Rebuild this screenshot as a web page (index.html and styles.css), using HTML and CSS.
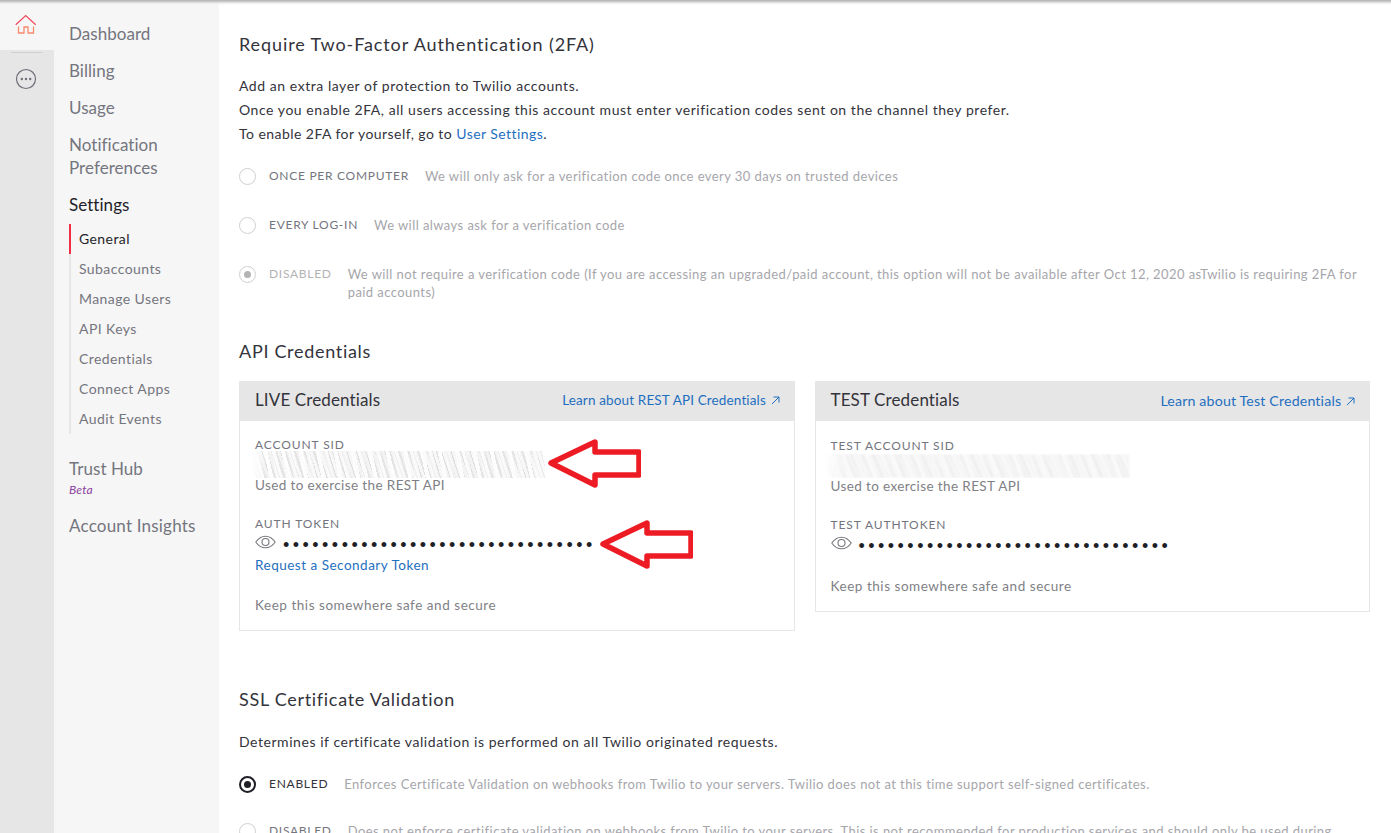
FILE: index.html
```html
<!DOCTYPE html>
<html lang="en">
<head>
<meta charset="utf-8">
<title>General Settings</title>
<link rel="stylesheet" href="styles.css">
</head>
<body>
<div class="app">
  <nav class="rail">
    <div class="rail-home">
      <svg width="22" height="20" viewBox="0 0 22 20" fill="none"><path d="M.7 9.700 10.700.6l10 9.100" stroke="#f5455c" stroke-width="1.200"/><path d="M3.500 11.500V18H9v-6h4v6h5.500v-6.500" stroke="#f78a6f" stroke-width="1.300"/></svg>
    </div>
    <div class="rail-more">
      <div class="rail-sep"></div>
      <svg width="22" height="22" viewBox="0 0 22 22" fill="none"><circle cx="11" cy="11" r="9.500" stroke="#6d6e78" stroke-width="1.200"/><circle cx="6.800" cy="11" r="1.200" fill="#6d6e78"/><circle cx="11" cy="11" r="1.200" fill="#6d6e78"/><circle cx="15.200" cy="11" r="1.200" fill="#6d6e78"/></svg>
    </div>
  </nav>
  <aside class="side">
    <a class="nav-item">Dashboard</a>
    <a class="nav-item">Billing</a>
    <a class="nav-item">Usage</a>
    <a class="nav-item">Notification Preferences</a>
    <a class="nav-item nav-current">Settings</a>
    <ul class="subnav">
      <li class="sub-active">General</li>
      <li>Subaccounts</li>
      <li>Manage Users</li>
      <li>API Keys</li>
      <li>Credentials</li>
      <li>Connect Apps</li>
      <li>Audit Events</li>
    </ul>
    <a class="nav-item nav-trust">Trust Hub</a>
    <div class="beta">Beta</div>
    <a class="nav-item nav-insights">Account Insights</a>
  </aside>
  <main class="main">
    <h2 class="title title-2fa">Require Two-Factor Authentication (2FA)</h2>
    <div class="intro">
      <p>Add an extra layer of protection to Twilio accounts.</p>
      <p>Once you enable 2FA, all users accessing this account must enter verification codes sent on the channel they prefer.</p>
      <p class="intro-last">To enable 2FA for yourself, go to <a class="link">User Settings</a>.</p>
    </div>
    <div class="option opt-first">
      <span class="radio"></span><span class="opt-label">ONCE PER COMPUTER</span><span class="opt-desc">We will only ask for a verification code once every 30 days on trusted devices</span>
    </div>
    <div class="option">
      <span class="radio"></span><span class="opt-label">EVERY LOG-IN</span><span class="opt-desc">We will always ask for a verification code</span>
    </div>
    <div class="option">
      <span class="radio radio-disabled"></span><span class="opt-label label-faded">DISABLED</span><span class="opt-desc">We will not require a verification code (If you are accessing an upgraded/paid account, this option will not be available after Oct 12, 2020 asTwilio is requiring 2FA for paid accounts)</span>
    </div>
    <h2 class="title title-api">API Credentials</h2>
    <div class="cards">
      <section class="card">
        <header class="card-head">
          <h3>LIVE Credentials</h3>
          <a class="link">Learn about REST API Credentials <svg class="ext" width="9" height="9" viewBox="0 0 9 9" fill="none" stroke="#1f6fc0" stroke-width="1"><path d="M1 8 8 1M2.500 1H8v5.500"/></svg></a>
        </header>
        <div class="card-body">
          <div class="cap">ACCOUNT SID</div>
          <div class="blur blur-live"></div>
          <div class="note note-used">Used to exercise the REST API</div>
          <div class="cap cap-token">AUTH TOKEN</div>
          <div class="token">
            <svg width="21" height="14" viewBox="0 0 21 14" fill="none" stroke="#77777e" stroke-width="1.100"><path d="M.8 7C3.500 3 7 1.200 10.500 1.200S17.500 3 20.200 7c-2.700 4-6.200 5.800-9.700 5.800S3.500 11 .8 7Z"/><circle cx="10.500" cy="7" r="3.500"/></svg>
            <span class="dots">••••••••••••••••••••••••••••••••</span>
          </div>
          <a class="link secondary">Request a Secondary Token</a>
          <div class="note note-safe">Keep this somewhere safe and secure</div>
        </div>
      </section>
      <section class="card card-test">
        <header class="card-head">
          <h3>TEST Credentials</h3>
          <a class="link link-test">Learn about Test Credentials <svg class="ext" width="9" height="9" viewBox="0 0 9 9" fill="none" stroke="#1f6fc0" stroke-width="1"><path d="M1 8 8 1M2.500 1H8v5.500"/></svg></a>
        </header>
        <div class="card-body body-test">
          <div class="cap">TEST ACCOUNT SID</div>
          <div class="blur blur-test"></div>
          <div class="note note-used">Used to exercise the REST API</div>
          <div class="cap cap-token">TEST AUTHTOKEN</div>
          <div class="token">
            <svg width="21" height="14" viewBox="0 0 21 14" fill="none" stroke="#77777e" stroke-width="1.100"><path d="M.8 7C3.500 3 7 1.200 10.500 1.200S17.500 3 20.200 7c-2.700 4-6.200 5.800-9.700 5.800S3.500 11 .8 7Z"/><circle cx="10.500" cy="7" r="3.500"/></svg>
            <span class="dots">••••••••••••••••••••••••••••••••</span>
          </div>
          <div class="note note-safe note-safe-test">Keep this somewhere safe and secure</div>
        </div>
      </section>
      <svg class="arrow arrow-a" width="96" height="54" viewBox="0 0 96 54" fill="none" stroke="#ed1c24" stroke-width="5.500" stroke-linejoin="round"><path d="M6 27 50 6v10h44v23H50v10Z"/></svg>
      <svg class="arrow arrow-b" width="96" height="54" viewBox="0 0 96 54" fill="none" stroke="#ed1c24" stroke-width="5.500" stroke-linejoin="round"><path d="M6 27 50 6v10h44v23H50v10Z"/></svg>
    </div>
    <h2 class="title title-ssl">SSL Certificate Validation</h2>
    <p class="ssl-intro">Determines if certificate validation is performed on all Twilio originated requests.</p>
    <div class="option opt-ssl">
      <span class="radio radio-on"></span><span class="opt-label label-dark">ENABLED</span><span class="opt-desc">Enforces Certificate Validation on webhooks from Twilio to your servers. Twilio does not at this time support self-signed certificates.</span>
    </div>
    <div class="option opt-ssl-2">
      <span class="radio"></span><span class="opt-label">DISABLED</span><span class="opt-desc opt-nowrap">Does not enforce certificate validation on webhooks from Twilio to your servers. This is not recommended for production services and should only be used during</span>
    </div>
  </main>
</div>
<div class="top-shadow"></div>
</body>
</html>
```
FILE: styles.css
```css
* { box-sizing: border-box; }
html, body { margin: 0; height: 833px; overflow: hidden; background: #fff; }
body { font-family: Lato, "Open Sans", sans-serif; color: #33333b; font-size: 14px; letter-spacing: .55px; }
p, h2, h3, ul { margin: 0; padding: 0; }
.top-shadow { position: absolute; left: 0; top: 0; width: 100%; height: 5px; background: linear-gradient(#b0b0b0, #cfcfcf 35%, rgba(240,240,240,.5) 75%, rgba(255,255,255,0)); }
.app { display: flex; height: 833px; }
.rail { width: 54px; background: #e6e6e6; flex: none; }
.rail-home { height: 50px; background: #f6f6f6; display: flex; justify-content: center; padding: 15px 3px 0 0; }
.rail-more { display: flex; flex-direction: column; align-items: center; padding-right: 2px; }
.rail-sep { width: 31px; height: 1px; background: #cfcfcf; margin: 2px 0 15px; }
.side { width: 165px; flex: none; background: #f6f6f6; padding: 22px 15px 0; }
.nav-item { display: block; font-size: 17px; line-height: 23px; color: #74757e; margin-bottom: 14px; letter-spacing: .05px; }
.nav-current { color: #1f1f28; margin-bottom: 8px; }
.subnav { list-style: none; border-left: 2px solid #e6e6e6; }
.subnav li { height: 30px; line-height: 30px; padding-left: 8px; font-size: 14px; letter-spacing: .42px; color: #74757e; margin-left: -2px; border-left: 2px solid transparent; }
.subnav .sub-active { color: #1f1f28; border-left-color: #f22f46; }
.nav-trust { margin: 23px 0 0; }
.beta { font-size: 12px; font-style: italic; color: #8b3f9e; line-height: 17px; margin: 1px 0 16px; letter-spacing: .2px; }
.nav-insights { letter-spacing: .2px; }
.main { flex: 1; min-width: 0; padding: 0 21px 0 20px; }
.title { font-size: 18px; font-weight: 400; line-height: 24px; color: #33333b; letter-spacing: .7px; }
.title-2fa { margin-top: 32px; letter-spacing: .9px; }
.intro { margin-top: 18px; line-height: 24px; }
.intro-last { letter-spacing: .45px; }
.link { color: #1f6fc0; }
.option { display: flex; align-items: flex-start; font-size: 13px; line-height: 18px; }
.opt-first { margin-top: 21px; }
.option + .option { margin-top: 31px; }
.radio { width: 17px; height: 17px; flex: none; border: 1px solid #cfcfcf; border-radius: 50%; margin: 1px 13px 0 0; background: #fff; display: flex; align-items: center; justify-content: center; }
.radio-disabled::after { content: ""; width: 7px; height: 7px; border-radius: 50%; background: #b3b3b3; }
.radio-on { border: 2px solid #1f1f28; }
.radio-on::after { content: ""; width: 7px; height: 7px; border-radius: 50%; background: #1f1f28; }
.opt-label { flex: none; color: #74757e; letter-spacing: .72px; font-size: 12px; margin-right: 16px; }
.label-faded { color: #b3b3b3; }
.label-dark { color: #33333b; }
.opt-desc { color: #a6a6ab; letter-spacing: .43px; }
.opt-nowrap { white-space: nowrap; }
.title-api { margin-top: 38px; }
.cards { display: flex; gap: 20px; align-items: flex-start; margin-top: 18px; position: relative; }
.card { flex: 1; }
.card-head { height: 40px; background: #e6e6e6; display: flex; justify-content: space-between; align-items: center; padding: 0 15px 4px 16px; }
.card-head h3 { font-size: 17px; font-weight: 400; color: #33333b; letter-spacing: .13px; }
.card-head .link { font-size: 13.500px; letter-spacing: .14px; padding-top: 2px; }
.card-head .link-test { font-size: 14.200px; letter-spacing: .16px; padding-top: 2px; }
.ext { margin-left: 1px; }
.card-body { padding: 16px 15px 16px; border: 1px solid #e6e6e6; border-top: 0; }
.body-test { padding-top: 17px; }
.cap { font-size: 12px; line-height: 16px; color: #74757e; letter-spacing: .9px; }
.blur { filter: blur(.5px); }
.blur-live { width: 293px; height: 27px; margin: -2px 0 -2px -3px; -webkit-mask-image: linear-gradient(90deg, transparent, #000 14px, #000 280px, rgba(0,0,0,.6)); mask-image: linear-gradient(90deg, transparent, #000 14px, #000 280px, rgba(0,0,0,.6)); background: repeating-linear-gradient(78deg, rgba(255,255,255,.85) 0 4px, rgba(255,255,255,0) 4px 7px, rgba(255,255,255,.5) 7px 12px, rgba(255,255,255,0) 12px 17px), repeating-linear-gradient(72deg, #f7f7f7 0 3px, #e4e4e4 3px 5px, #f3f3f3 5px 8px, #dedede 8px 9px); }
.blur-test { width: 306px; height: 24px; margin: 0 0 -1px -7px; filter: blur(.8px); -webkit-mask-image: linear-gradient(90deg, transparent, #000 20px); mask-image: linear-gradient(90deg, transparent, #000 20px); background: repeating-linear-gradient(70deg, rgba(255,255,255,.6) 0 5px, rgba(255,255,255,0) 5px 11px, rgba(255,255,255,.4) 11px 19px, rgba(255,255,255,0) 19px 23px), repeating-linear-gradient(66deg, #f7f7f7 0 3px, #ececec 3px 5px, #f4f4f4 5px 9px, #e6e6e6 9px 10px); }
.note { font-size: 13.500px; line-height: 18px; color: #807f85; letter-spacing: .38px; }
.note-used { margin-bottom: 1px; }
.cap-token { margin-top: 22px; }
.token { display: flex; align-items: center; gap: 7px; height: 20px; }
.dots { font-size: 18px; letter-spacing: 3.470px; color: #1f1f28; font-family: "Liberation Sans", sans-serif; line-height: 20px; white-space: nowrap; padding-top: 6px; }
.secondary { display: block; font-size: 13.500px; line-height: 18px; margin-top: 4px; letter-spacing: .5px; }
.note-safe { margin-top: 22px; letter-spacing: .54px; }
.note-safe-test { margin-top: 24px; }
.arrow { position: absolute; }
.arrow-a { left: 306px; top: 55px; }
.arrow-b { left: 358px; top: 136px; }
.title-ssl { margin-top: 56px; }
.ssl-intro { margin-top: 19px; line-height: 24px; }
.opt-ssl { margin-top: 21px; }
.option + .opt-ssl-2 { margin-top: 29px; }
```
